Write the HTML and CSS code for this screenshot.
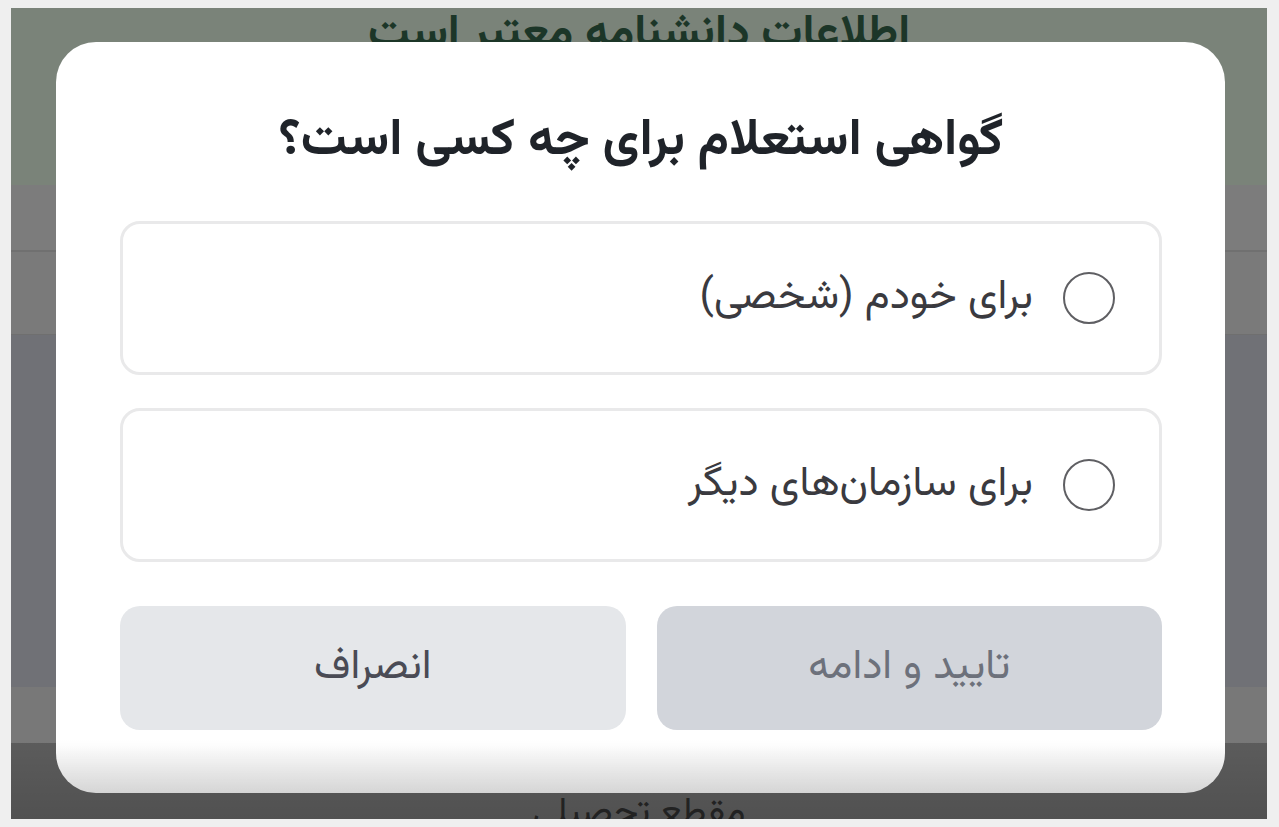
FILE: index.html
```html
<!DOCTYPE html>
<html lang="fa" dir="rtl">
<head>
<meta charset="utf-8">
<title>گواهی استعلام</title>
<link rel="stylesheet" href="styles.css">
</head>
<body>
<div class="frame">
  <div class="screen">
    <div class="page">
      <div class="band band-green"><span class="bg-title">اطلاعات دانشنامه معتبر است</span></div>
      <div class="band band-a"></div>
      <div class="band band-b"></div>
      <div class="band band-c"></div>
      <div class="band band-d"></div>
      <div class="band band-e"><span class="bg-label">مقطع تحصیلی</span></div>
    </div>
    <div class="modal">
      <h1 class="modal-title">گواهی استعلام برای چه کسی است؟</h1>
      <div class="options">
        <label class="option">
          <span class="radio"></span>
          <span class="option-text">برای خودم (شخصی)</span>
        </label>
        <label class="option">
          <span class="radio"></span>
          <span class="option-text">برای سازمان‌های دیگر</span>
        </label>
      </div>
      <div class="actions">
        <button class="btn btn-confirm">تایید و ادامه</button>
        <button class="btn btn-cancel">انصراف</button>
      </div>
      <div class="modal-fade"></div>
    </div>
    <div class="bottom-shade"></div>
  </div>
</div>
</body>
</html>
```
FILE: styles.css
```css
* { box-sizing: border-box; }
html, body { margin: 0; padding: 0; }
body {
  background: #efefef;
  font-family: "Vazirmatn", "Noto Sans Arabic", "DejaVu Sans", sans-serif;
  width: 1279px;
  height: 827px;
  overflow: hidden;
}
.frame {
  padding: 8px 12px 8px 11px;
  height: 827px;
}
.screen {
  position: relative;
  width: 1256px;
  height: 811px;
  overflow: hidden;
  background: #707176;
}
.page {
  display: flex;
  flex-direction: column;
  height: 100%;
}
.band { flex: none; }
.band-green {
  height: 177px;
  background: #7a8379;
  display: flex;
  justify-content: center;
  padding-top: 2px;
}
.bg-title {
  font-size: 46px;
  font-weight: 700;
  color: #1c3628;
  line-height: 50px;
}
.band-a { height: 67px; background: #7c7c7c; border-bottom: 2px solid #707070; }
.band-b { height: 83px; background: #7a7a7a; border-bottom: 1px solid #6f6f6f; }
.band-c { height: 352px; background: #707176; }
.band-d { height: 56px; background: #787878; }
.band-e {
  flex: 1;
  background: #5c5c5c;
  display: flex;
  justify-content: center;
  padding-top: 46px;
}
.bg-label {
  font-size: 37px;
  color: #262626;
  line-height: 50px;
}
.modal {
  position: absolute;
  left: 45px;
  top: 34px;
  width: 1169px;
  height: 751px;
  background: #ffffff;
  border-radius: 40px;
  padding: 60px 63px 63px 64px;
  display: flex;
  flex-direction: column;
  overflow: hidden;
}
.modal-title {
  margin: 0;
  height: 76px;
  line-height: 80px;
  font-size: 51px;
  font-weight: 700;
  color: #1f2329;
  text-align: center;
}
.options {
  margin-top: 43px;
  display: flex;
  flex-direction: column;
  gap: 33px;
}
.option {
  height: 154px;
  border: 3px solid #e9e9ea;
  border-radius: 20px;
  display: flex;
  align-items: center;
  gap: 30px;
  padding-right: 44px;
}
.radio {
  width: 52px;
  height: 52px;
  border: 2px solid #5f5f63;
  border-radius: 50%;
  flex: none;
}
.option-text {
  font-size: 42px;
  color: #3a3a3f;
  line-height: 50px;
}
.actions {
  margin-top: 44px;
  display: flex;
  gap: 31px;
}
.btn {
  flex: 1;
  height: 124px;
  border: none;
  border-radius: 20px;
  font-family: inherit;
  font-size: 42px;
}
.btn-confirm { background: #d2d5db; color: #6d717b; }
.btn-cancel { background: #e5e7ea; color: #4a4b55; }
.modal-fade {
  position: absolute;
  left: 0;
  right: 0;
  bottom: 0;
  height: 48px;
  background: linear-gradient(to bottom, rgba(0,0,0,0), rgba(0,0,0,0.09));
}
.bottom-shade {
  position: absolute;
  left: 0;
  right: 0;
  bottom: 0;
  height: 80px;
  background: linear-gradient(to bottom, rgba(0,0,0,0), rgba(0,0,0,0.12));
  pointer-events: none;
}
```
